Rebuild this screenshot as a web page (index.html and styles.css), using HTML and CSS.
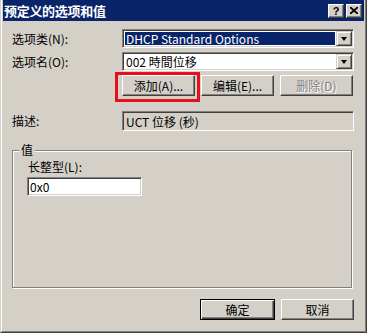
FILE: index.html
```html
<!DOCTYPE html>
<html lang="zh-CN">
<head>
    <meta charset="UTF-8">
    <title>预定义的选项和值</title>
    <link rel="stylesheet" href="styles.css">
</head>
<body>
    <div class="window">
        <div class="frame">
            <!-- Title bar -->
            <div class="titlebar">
                <span class="title">预定义的选项和值</span>
                <div class="title-buttons">
                    <span class="tbtn help">?</span>
                    <span class="tbtn close">
                        <svg width="8" height="7" viewBox="0 0 8 7"><path d="M0 0 L8 7 M8 0 L0 7" stroke="#000" stroke-width="1.8"/></svg>
                    </span>
                </div>
            </div>

            <div class="content">
                <div class="row">
                    <span class="label">选项类(N):</span>
                    <div class="combo">
                        <span class="combo-value selected">DHCP Standard Options</span>
                        <span class="drop"><i class="arrow"></i></span>
                    </div>
                </div>
                <div class="row row-gap">
                    <span class="label">选项名(O):</span>
                    <div class="combo">
                        <span class="combo-value">002 時間位移</span>
                        <span class="drop"><i class="arrow"></i></span>
                    </div>
                </div>

                <div class="actions">
                    <div class="highlighted">
                        <button class="btn">添加(A)...</button>
                        <span class="red-box"></span>
                    </div>
                    <button class="btn">编辑(E)...</button>
                    <button class="btn" disabled>删除(D)</button>
                </div>

                <div class="row desc-row">
                    <span class="label">描述:</span>
                    <div class="field readonly">UCT 位移 (秒)</div>
                </div>

                <div class="group">
                    <span class="group-title">值</span>
                    <div class="label">长整型(L):</div>
                    <div class="field input">0x0</div>
                </div>

                <div class="footer">
                    <button class="btn btn-default">确定</button>
                    <button class="btn btn-cancel">取消</button>
                </div>
            </div>
        </div>
    </div>
</body>
</html>
```

FILE: styles.css
```css
body {
    margin: 0;
    background: #d4d0c8;
    font-family: "Noto Sans CJK SC", "Liberation Sans", sans-serif;
    font-size: 12px;
    color: #000;
}
.window {
    width: 367px;
    height: 333px;
    box-sizing: border-box;
    background: #d4d0c8;
    border-left: 1px solid #d4d0c8;
    border-right: 1px solid #404040;
    border-bottom: 1px solid #404040;
}
.frame {
    height: 100%;
    box-sizing: border-box;
    border-left: 1px solid #fff;
    border-right: 1px solid #808080;
    border-bottom: 1px solid #808080;
    padding: 0 1px 1px 1px;
}
.titlebar {
    height: 21px;
    background: #0a246a;
    display: flex;
    align-items: center;
    justify-content: space-between;
    padding: 0 2px 0 1px;
}
.title {
    color: #fff;
    font-weight: bold;
    font-size: 13px;
    line-height: 21px;
    letter-spacing: -0.3px;
}
.title-buttons {
    display: flex;
    gap: 2px;
}
.tbtn {
    width: 16px;
    height: 14px;
    box-sizing: border-box;
    background: #d4d0c8;
    border: 1px solid;
    border-color: #fff #404040 #404040 #fff;
    box-shadow: inset -1px -1px #808080;
    display: flex;
    align-items: center;
    justify-content: center;
}
.help {
    font-family: "Liberation Sans", sans-serif;
    font-weight: bold;
    font-size: 11px;
    line-height: 12px;
}
.content {
    padding: 8px 10px 0 9px;
}
.row {
    display: grid;
    grid-template-columns: 110px 1fr;
    align-items: center;
    height: 19px;
}
.row-gap {
    margin-top: 4px;
}
.label {
    line-height: 14px;
    white-space: nowrap;
}
.combo {
    height: 19px;
    box-sizing: border-box;
    background: #fff;
    border: 1px solid;
    border-color: #808080 #fff #fff #808080;
    box-shadow: inset 1px 1px #404040, inset -1px -1px #d4d0c8;
    display: flex;
    padding: 2px;
    gap: 1px;
}
.combo-value {
    flex: 1;
    line-height: 13px;
    padding-left: 1px;
    white-space: nowrap;
}
.selected {
    background: #0a246a;
    color: #fff;
}
.drop {
    width: 16px;
    box-sizing: border-box;
    background: #d4d0c8;
    border: 1px solid;
    border-color: #d4d0c8 #404040 #404040 #d4d0c8;
    box-shadow: inset 1px 1px #fff, inset -1px -1px #808080;
    display: flex;
    align-items: center;
    justify-content: center;
    margin: -1px -1px -1px 0;
}
.arrow {
    width: 0;
    height: 0;
    border-left: 3.5px solid transparent;
    border-right: 3.5px solid transparent;
    border-top: 4px solid #000;
}
.actions {
    display: flex;
    gap: 6px;
    margin: 4px 0 0 110px;
}
.highlighted {
    position: relative;
    display: flex;
}
.btn {
    width: 73px;
    height: 21px;
    box-sizing: border-box;
    padding: 0;
    font-family: inherit;
    font-size: 12px;
    line-height: 14px;
    color: #000;
    background: #d4d0c8;
    border: 1px solid;
    border-color: #fff #404040 #404040 #fff;
    box-shadow: inset -1px -1px #808080;
}
.btn:disabled {
    color: #808080;
    text-shadow: 1px 1px #fff;
}
.red-box {
    position: absolute;
    left: -7px;
    top: -3px;
    width: 85px;
    height: 30px;
    box-sizing: border-box;
    border: 3px solid #e3111b;
}
.desc-row {
    margin-top: 15px;
    height: 20px;
}
.field {
    height: 20px;
    box-sizing: border-box;
    border: 1px solid;
    border-color: #808080 #fff #fff #808080;
    box-shadow: inset 1px 1px #404040, inset -1px -1px #d4d0c8;
    padding: 2px 3px;
    line-height: 15px;
    white-space: nowrap;
}
.readonly {
    background: #d4d0c8;
}
.group {
    position: relative;
    margin: 19px 2px 0 0;
    height: 138px;
    box-sizing: border-box;
    border: 1px solid #808080;
    box-shadow: inset 1px 1px #fff, 1px 1px #fff;
    padding: 9px 0 0 14px;
}
.group-title {
    position: absolute;
    left: 6px;
    top: -8px;
    background: #d4d0c8;
    padding: 0 2px;
    line-height: 14px;
}
.group .label {
    padding-left: 1px;
}
.input {
    width: 115px;
    height: 19px;
    margin-top: 3px;
    background: #fff;
    padding: 2px 2px;
    line-height: 14px;
}
.footer {
    display: flex;
    justify-content: flex-end;
    gap: 6px;
    margin-top: 11px;
}
.btn-default {
    width: 75px;
    border: 1px solid #000;
    box-shadow: inset 1px 1px #fff, inset -1px -1px #404040, inset -2px -2px #808080;
}
```
